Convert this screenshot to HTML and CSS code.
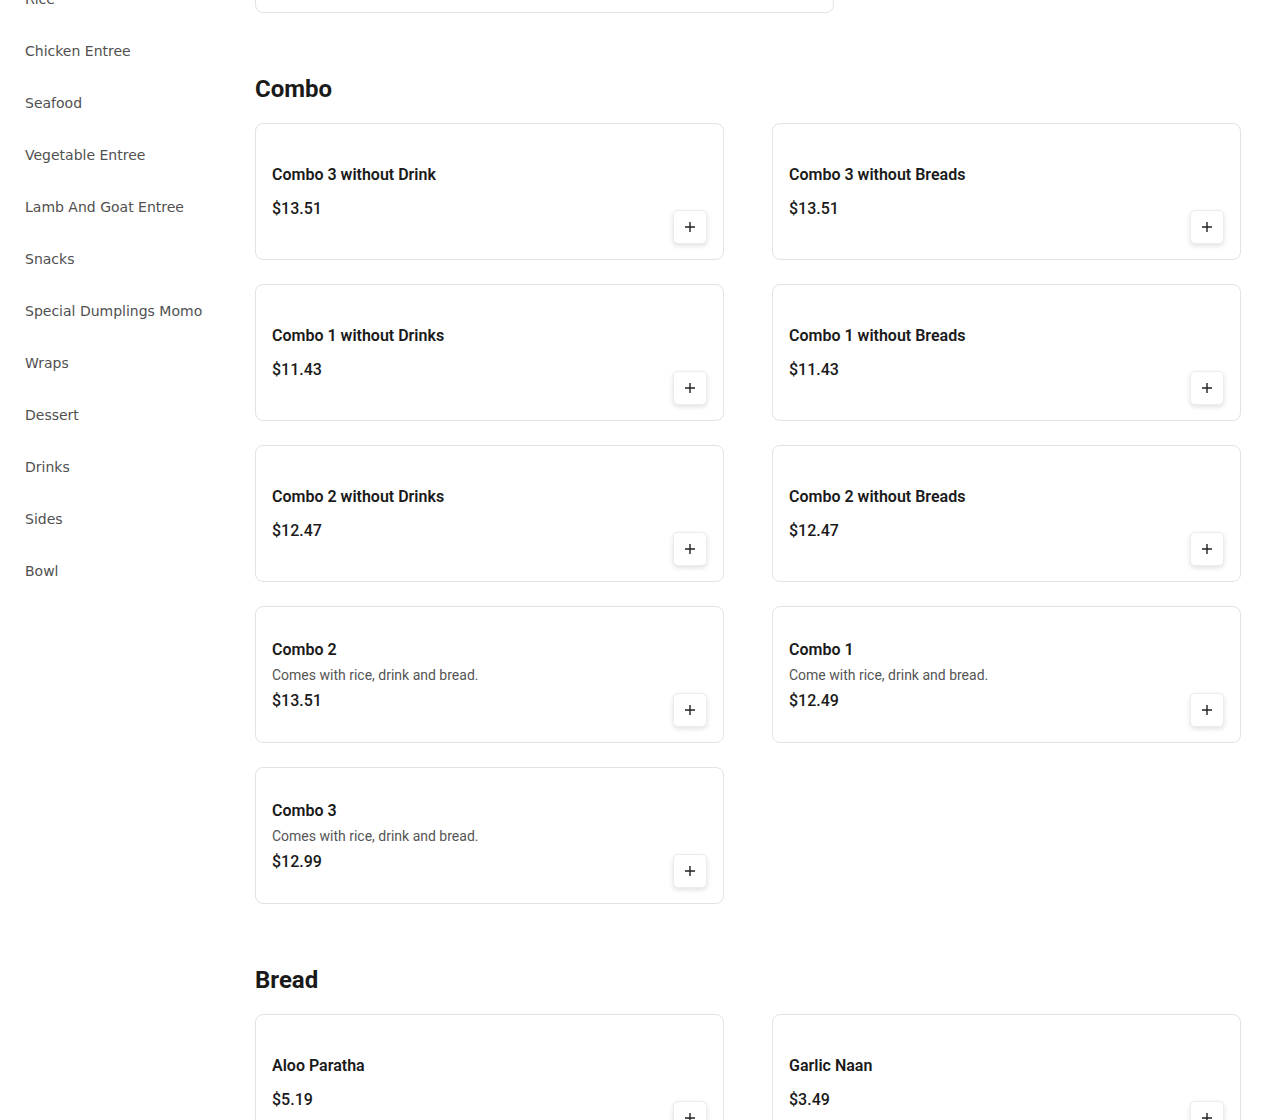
FILE: index.html
```html
<!DOCTYPE html>
<html lang="en">
<head>
<meta charset="utf-8">
<title>Menu</title>
<link rel="stylesheet" href="styles.css">
</head>
<body>
<div class="page">
  <nav class="sidebar">
    <a class="cat">Rice</a>
    <a class="cat">Chicken Entree</a>
    <a class="cat">Seafood</a>
    <a class="cat">Vegetable Entree</a>
    <a class="cat">Lamb And Goat Entree</a>
    <a class="cat">Snacks</a>
    <a class="cat">Special Dumplings Momo</a>
    <a class="cat">Wraps</a>
    <a class="cat">Dessert</a>
    <a class="cat">Drinks</a>
    <a class="cat">Sides</a>
    <a class="cat">Bowl</a>
  </nav>
  <main class="main">
    <section class="section section-prev">
      <div class="card card-wide"></div>
    </section>

    <section class="section">
      <h2 class="section-title">Combo</h2>
      <div class="grid">
        <div class="card">
          <div class="info"><div class="name">Combo 3 without Drink</div><div class="price">$13.51</div></div>
          <button class="add" aria-label="Add"><svg viewBox="0 0 12 12" width="12" height="12"><path d="M6 1v10M1 6h10" stroke="#222" stroke-width="1.4" fill="none"/></svg></button>
        </div>
        <div class="card">
          <div class="info"><div class="name">Combo 3 without Breads</div><div class="price">$13.51</div></div>
          <button class="add" aria-label="Add"><svg viewBox="0 0 12 12" width="12" height="12"><path d="M6 1v10M1 6h10" stroke="#222" stroke-width="1.4" fill="none"/></svg></button>
        </div>
        <div class="card">
          <div class="info"><div class="name">Combo 1 without Drinks</div><div class="price">$11.43</div></div>
          <button class="add" aria-label="Add"><svg viewBox="0 0 12 12" width="12" height="12"><path d="M6 1v10M1 6h10" stroke="#222" stroke-width="1.4" fill="none"/></svg></button>
        </div>
        <div class="card">
          <div class="info"><div class="name">Combo 1 without Breads</div><div class="price">$11.43</div></div>
          <button class="add" aria-label="Add"><svg viewBox="0 0 12 12" width="12" height="12"><path d="M6 1v10M1 6h10" stroke="#222" stroke-width="1.4" fill="none"/></svg></button>
        </div>
        <div class="card">
          <div class="info"><div class="name">Combo 2 without Drinks</div><div class="price">$12.47</div></div>
          <button class="add" aria-label="Add"><svg viewBox="0 0 12 12" width="12" height="12"><path d="M6 1v10M1 6h10" stroke="#222" stroke-width="1.4" fill="none"/></svg></button>
        </div>
        <div class="card">
          <div class="info"><div class="name">Combo 2 without Breads</div><div class="price">$12.47</div></div>
          <button class="add" aria-label="Add"><svg viewBox="0 0 12 12" width="12" height="12"><path d="M6 1v10M1 6h10" stroke="#222" stroke-width="1.4" fill="none"/></svg></button>
        </div>
        <div class="card">
          <div class="info info-desc"><div class="name">Combo 2</div><div class="desc">Comes with rice, drink and bread.</div><div class="price">$13.51</div></div>
          <button class="add" aria-label="Add"><svg viewBox="0 0 12 12" width="12" height="12"><path d="M6 1v10M1 6h10" stroke="#222" stroke-width="1.4" fill="none"/></svg></button>
        </div>
        <div class="card">
          <div class="info info-desc"><div class="name">Combo 1</div><div class="desc">Come with rice, drink and bread.</div><div class="price">$12.49</div></div>
          <button class="add" aria-label="Add"><svg viewBox="0 0 12 12" width="12" height="12"><path d="M6 1v10M1 6h10" stroke="#222" stroke-width="1.4" fill="none"/></svg></button>
        </div>
        <div class="card">
          <div class="info info-desc"><div class="name">Combo 3</div><div class="desc">Comes with rice, drink and bread.</div><div class="price">$12.99</div></div>
          <button class="add" aria-label="Add"><svg viewBox="0 0 12 12" width="12" height="12"><path d="M6 1v10M1 6h10" stroke="#222" stroke-width="1.4" fill="none"/></svg></button>
        </div>
      </div>
    </section>

    <section class="section">
      <h2 class="section-title">Bread</h2>
      <div class="grid">
        <div class="card">
          <div class="info"><div class="name">Aloo Paratha</div><div class="price">$5.19</div></div>
          <button class="add" aria-label="Add"><svg viewBox="0 0 12 12" width="12" height="12"><path d="M6 1v10M1 6h10" stroke="#222" stroke-width="1.4" fill="none"/></svg></button>
        </div>
        <div class="card">
          <div class="info"><div class="name">Garlic Naan</div><div class="price">$3.49</div></div>
          <button class="add" aria-label="Add"><svg viewBox="0 0 12 12" width="12" height="12"><path d="M6 1v10M1 6h10" stroke="#222" stroke-width="1.4" fill="none"/></svg></button>
        </div>
      </div>
    </section>
  </main>
</div>
</body>
</html>
```
FILE: styles.css
```css
* { box-sizing: border-box; }
html, body { margin: 0; padding: 0; background: #fff; }
body { overflow: hidden; height: 1120px; }

.page {
  display: flex;
  align-items: flex-start;
}

.sidebar {
  width: 255px;
  flex: 0 0 255px;
  display: flex;
  flex-direction: column;
  padding-left: 25px;
  margin-top: -27px;
}

.cat {
  font-family: "DejaVu Sans", sans-serif;
  font-size: 14px;
  line-height: 20px;
  padding: 16px 0;
  color: #505050;
}

.main {
  flex: 1;
  padding-right: 29px;
  margin-top: -124px;
  font-family: Roboto, "Liberation Sans", sans-serif;
  color: #1a1a1a;
}

.section { margin-bottom: 60px; }

.card-wide { width: 579px; }

.section-title {
  font-size: 24px;
  line-height: 32px;
  font-weight: 700;
  margin: 0 0 18px;
  color: #1a1a1a;
}

.grid {
  display: grid;
  grid-template-columns: 1fr 1fr;
  column-gap: 48px;
  row-gap: 24px;
}

.card {
  height: 137px;
  border: 1px solid #e3e3e3;
  border-radius: 8px;
  padding: 16px;
  display: flex;
  justify-content: space-between;
  background: #fff;
}

.info {
  align-self: center;
  display: flex;
  flex-direction: column;
}

.info-desc { padding-top: 2px; }

.name {
  font-size: 16px;
  line-height: 24px;
  font-weight: 600;
  color: #1a1a1a;
}

.desc {
  font-size: 14px;
  line-height: 20px;
  color: #555;
  margin-top: 3px;
}

.price {
  font-size: 16px;
  line-height: 24px;
  font-weight: 500;
  color: #1a1a1a;
  margin-top: 10px;
}

.desc + .price { margin-top: 4px; }

.add {
  align-self: flex-end;
  width: 34px;
  height: 34px;
  flex: 0 0 34px;
  margin-bottom: -1px;
  padding: 0;
  border: 1px solid #ececec;
  border-radius: 5px;
  background: #fff;
  box-shadow: 0 2px 5px rgba(0,0,0,0.12);
  display: flex;
  align-items: center;
  justify-content: center;
}
.add svg { display: block; }
```
